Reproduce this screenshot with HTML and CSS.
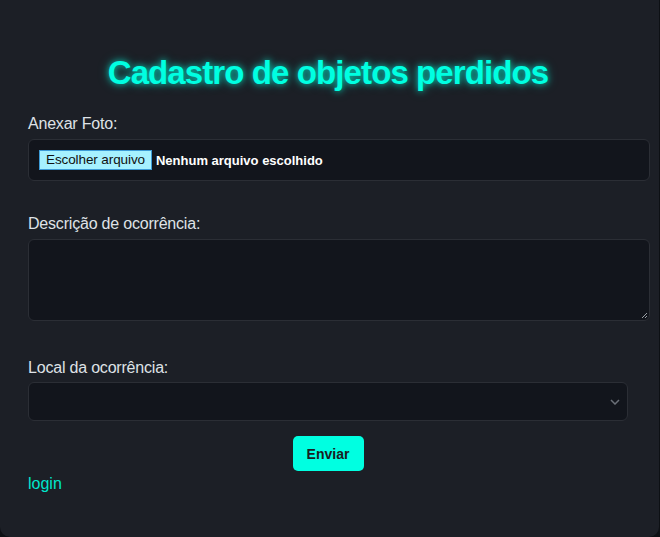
FILE: index.html
```html
<!DOCTYPE html>
<html lang="pt-BR">
<head>
<meta charset="utf-8">
<title>Cadastro de objetos perdidos</title>
<link rel="stylesheet" href="styles.css">
</head>
<body>
<main class="card">
  <h1 class="title">Cadastro de objetos perdidos</h1>
  <form class="form">
    <label class="label" for="foto">Anexar Foto:</label>
    <div class="file-box">
      <span class="file-btn">Escolher arquivo</span>
      <span class="file-name">Nenhum arquivo escolhido</span>
    </div>

    <label class="label label-gap" for="desc">Descrição de ocorrência:</label>
    <div class="textarea-box">
      <svg class="grip" width="7" height="7" viewBox="0 0 7 7"><path d="M6 1L1 6M6 4L4 6" stroke="#9aa0a6" stroke-width="1"/></svg>
    </div>

    <label class="label label-gap-lg" for="local">Local da ocorrência:</label>
    <div class="select-box">
      <svg class="chev" width="10" height="6" viewBox="0 0 10 6"><path d="M1 1L5 5L9 1" fill="none" stroke="#6b7078" stroke-width="1.5"/></svg>
    </div>

    <div class="actions"><button type="button" class="submit">Enviar</button></div>
  </form>
  <a class="login" href="#">login</a>
</main>
</body>
</html>
```
FILE: styles.css
```css
html, body {
  margin: 0;
  padding: 0;
  background: #0d1014;
}
body {
  width: 660px;
  height: 537px;
  overflow: hidden;
  font-family: "Liberation Sans", Arial, sans-serif;
}
.card {
  box-sizing: border-box;
  width: 659px;
  height: 537px;
  background: #1c1f26;
  border-radius: 0 0 10px 10px;
  padding: 55px 0 0 28px;
}
.title {
  width: 600px;
  margin: 0 0 24px 0;
  text-align: center;
  font-size: 33px;
  line-height: 36px;
  font-weight: bold;
  letter-spacing: -0.9px;
  color: #00ffe1;
  text-shadow: 0 0 6px rgba(0, 255, 225, 0.7), 0 0 12px rgba(0, 255, 225, 0.35);
}
.form {
  display: flex;
  flex-direction: column;
  width: 600px;
}
.label {
  display: block;
  color: #dfe2e6;
  font-size: 16px;
  line-height: 18px;
  letter-spacing: -0.2px;
  margin-bottom: 6px;
}
.label-gap {
  margin-top: 34px;
}
.label-gap-lg {
  margin-top: 38px;
  margin-bottom: 5px;
}
.file-box {
  display: flex;
  align-items: center;
  gap: 4px;
  width: 622px;
  height: 42px;
  box-sizing: border-box;
  padding: 0 10px;
  background: #12151c;
  border: 1px solid #2b2e35;
  border-radius: 6px;
}
.file-btn {
  box-sizing: border-box;
  height: 20px;
  padding: 0 6px;
  background: #a6f1ff;
  border: 1px solid #3d9bd6;
  color: #111;
  font-size: 13.5px;
  line-height: 18px;
  letter-spacing: -0.1px;
}
.file-name {
  color: #ffffff;
  font-weight: bold;
  font-size: 13px;
}
.textarea-box {
  position: relative;
  width: 622px;
  height: 82px;
  box-sizing: border-box;
  background: #12151c;
  border: 1px solid #2b2e35;
  border-radius: 6px;
}
.grip {
  position: absolute;
  right: 1px;
  bottom: 1px;
}
.select-box {
  display: flex;
  align-items: center;
  justify-content: flex-end;
  width: 600px;
  height: 39px;
  box-sizing: border-box;
  padding-right: 7px;
  background: #12151c;
  border: 1px solid #2b2e35;
  border-radius: 6px;
}
.actions {
  display: flex;
  justify-content: center;
  margin-top: 15px;
}
.submit {
  width: 71px;
  height: 35px;
  border: none;
  border-radius: 5px;
  background: #00ffe1;
  color: #1a1d22;
  font-family: "Liberation Sans", Arial, sans-serif;
  font-weight: bold;
  font-size: 14px;
}
.login {
  display: inline-block;
  margin-top: 4px;
  color: #00e6cc;
  font-size: 16px;
  text-decoration: none;
}
```
